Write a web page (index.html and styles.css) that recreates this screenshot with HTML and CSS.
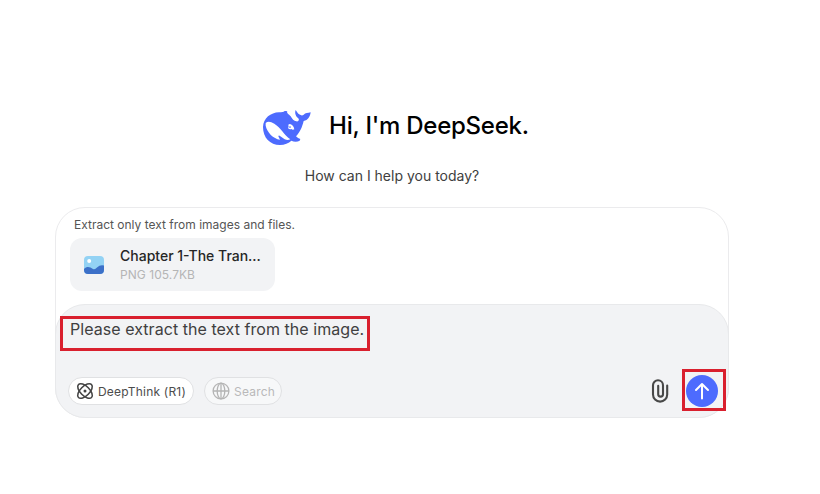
FILE: index.html
```
<!DOCTYPE html>
<html lang="en">
<head>
	<meta charset="utf-8">
	<title>DeepSeek</title>
	<link rel="stylesheet" href="styles.css">
</head>
<body>
	<main class="page">
		<div class="welcome">
			<svg class="logo" width="50" height="38" viewBox="36 39 150 114">
				<path fill="#4d6bfe" d="M39 96C40 69 62 53 87 52C96 52 100 51 104 48Q108 47 112 49C109 54 116 58 122 64C126 72 132 78 139 79C145 80 148 75 146 71C138 65 133 55 137 45C142 53 146 59 154 61Q157 62 161 59C166 54 174 54 182 52C180 66 174 76 161 78C156 98 150 111 138 124Q144 131 151 132L149 137C142 141 132 141 124 137C116 144 104 150 90 150C60 150 39 128 39 96Z"/>
				<path fill="#fff" d="M47 84Q56 76 73 86C93 98 101 119 121 133Q113 137 104 133L91 124Q86 119 85 124L90 134C70 131 51 112 47 92Z"/>
				<path fill="#fff" d="M115 89C121 84 131 91 133 103Q128 106 124 102Q118 104 114 99Q117 97 115 89Z"/>
				<circle cx="120" cy="96" r="2.6" fill="#4d6bfe"/>
			</svg>
			<h1>Hi, I'm DeepSeek.</h1>
		</div>
		<p class="subtitle">How can I help you today?</p>

		<div class="chat">
			<div class="files">
				<p class="hint">Extract only text from images and files.</p>
				<div class="file">
					<svg width="22" height="20" viewBox="0 0 22 20">
						<rect x="1" y="1" width="20" height="18" rx="4" fill="#93d2f4"/>
						<path fill="#3c70c8" d="M1 14C4 11 7 12 10 14Q12 15 14 12.5Q17 9.5 21 10.5V15Q21 19 17 19H5Q1 19 1 15Z"/>
						<circle cx="6.2" cy="6" r="2" fill="#fff"/>
					</svg>
					<div class="file_info">
						<div class="file_name">Chapter 1-The Tran...</div>
						<div class="file_size">PNG 105.7KB</div>
					</div>
				</div>
			</div>

			<div class="input">
				<div class="message">Please extract the text from the image.</div>
				<div class="toolbar">
					<button class="pill think">
						<svg width="18" height="18" viewBox="0 0 18 18" fill="none" stroke="#444" stroke-width="1.6">
							<ellipse cx="9" cy="9" rx="9.2" ry="4.6" transform="rotate(45 9 9)"/>
							<ellipse cx="9" cy="9" rx="9.2" ry="4.6" transform="rotate(-45 9 9)"/>
							<circle cx="9" cy="9" r="1.5" fill="#444" stroke="none"/>
						</svg>
						<span>DeepThink (R1)</span>
					</button>
					<button class="pill search">
						<svg width="18" height="18" viewBox="0 0 18 18" fill="none" stroke="#b4b4b4" stroke-width="1.3">
							<circle cx="9" cy="9" r="7.9"/>
							<ellipse cx="9" cy="9" rx="3.8" ry="7.9"/>
							<path d="M1 9H17M9 1V17"/>
						</svg>
						<span>Search</span>
					</button>
					<svg class="clip" width="18" height="24" viewBox="0 0 18 24" fill="none" stroke="#484848" stroke-width="2.1" stroke-linecap="round">
						<path d="M16.2 6.5V15.5A7.1 7.1 0 0 1 2 15.5V6.2A5 5 0 0 1 12 6.2V15.2A2.4 2.4 0 0 1 7.2 15.2V6.8"/>
					</svg>
					<button class="send">
						<svg width="18" height="20" viewBox="0 0 18 20" fill="none" stroke="#fff" stroke-width="2" stroke-linecap="round" stroke-linejoin="round">
							<path d="M9 17.5V3M3 9L9 3L15 9"/>
						</svg>
					</button>
				</div>
			</div>
			<div class="mark mark_text"></div>
			<div class="mark mark_send"></div>
		</div>
	</main>
</body>
</html>
```
FILE: styles.css
```
* {
	box-sizing: border-box;
}

body {
	margin: 0;
	background: #fff;
	font-family: Inter, "Liberation Sans", sans-serif;
	color: #404040;
}

h1, p {
	margin: 0;
}

.page {
	width: 674px;
	margin-left: 55px;
	padding-top: 108px;
}

.welcome {
	display: flex;
	align-items: center;
	gap: 17px;
	height: 38px;
	padding-left: 207px;
}

.logo {
	flex: none;
}

h1 {
	padding-bottom: 2px;
	font-size: 24px;
	line-height: 34px;
	font-weight: 500;
	letter-spacing: -0.24px;
	color: #000;
	white-space: nowrap;
}

.subtitle {
	margin-top: 20px;
	text-align: center;
	font-size: 14px;
	line-height: 20px;
}

.chat {
	position: relative;
	height: 211px;
	margin-top: 21px;
	border: 1px solid #ebebed;
	border-radius: 30px;
}

.files {
	height: 96px;
	padding: 8px 14px 0;
}

.hint {
	padding-left: 4px;
	font-size: 12px;
	line-height: 18px;
	color: #555;
}

.file {
	display: flex;
	align-items: center;
	gap: 15px;
	width: 205px;
	height: 53px;
	margin-top: 4px;
	padding-left: 13px;
	border-radius: 12px;
	background: #f2f3f5;
}

.file_name {
	font-size: 14px;
	line-height: 19px;
	font-weight: 500;
	color: #262626;
	white-space: nowrap;
}

.file_size {
	padding-top: 1px;
	font-size: 12px;
	line-height: 17px;
	letter-spacing: 0.05px;
	color: #b5b5b5;
}

.input {
	display: flex;
	flex-direction: column;
	justify-content: space-between;
	height: 114px;
	margin: 0 -1px;
	padding: 12px 10px 12px 12px;
	border: 1px solid #e8e9eb;
	border-radius: 30px;
	background: #f2f3f5;
}

.message {
	padding-left: 2px;
	font-size: 16px;
	line-height: 24px;
	letter-spacing: 0.05px;
	white-space: nowrap;
}

.toolbar {
	display: flex;
	align-items: center;
	height: 28px;
}

.pill {
	display: flex;
	align-items: center;
	gap: 4px;
	height: 28px;
	padding: 0 0 0 7px;
	border: 1px solid #e0e1e3;
	border-radius: 14px;
	background: #fff;
	font-family: inherit;
	font-size: 12px;
	letter-spacing: 0.2px;
	color: #4c4c4c;
	white-space: nowrap;
}

.think {
	width: 126px;
	margin-right: 10px;
}

.search {
	width: 78px;
	background: #f7f8f9;
	color: #b9b9b9;
}

.clip {
	margin-left: auto;
	margin-right: 17px;
}

.send {
	display: flex;
	align-items: center;
	justify-content: center;
	width: 32px;
	height: 32px;
	padding: 0;
	border: 0;
	border-radius: 50%;
	background: #4d6bfe;
}

/* red highlight frames */
.mark {
	position: absolute;
	border: 3px solid #d9202e;
}

.mark_text {
	left: 4px;
	top: 108px;
	width: 310px;
	height: 35px;
}

.mark_send {
	left: 626px;
	top: 161px;
	width: 44px;
	height: 42px;
}
```
